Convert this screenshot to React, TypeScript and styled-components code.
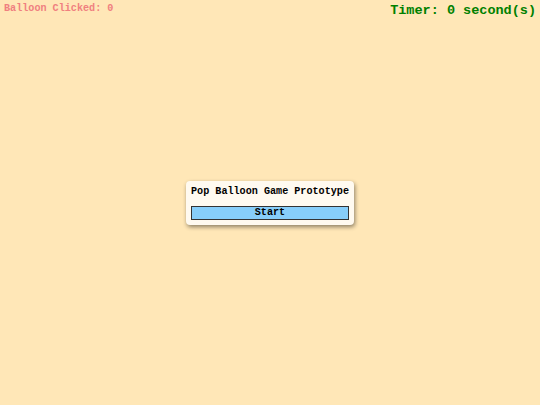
import styled, { createGlobalStyle } from "styled-components";

const GlobalStyle = createGlobalStyle`
  html, body {
    margin: 0;
    padding: 0;
    height: 100%;
  }
  body {
    background: #ffe7b7;
    font-family: "Liberation Mono", "DejaVu Sans Mono", monospace;
  }
  #root {
    min-height: 100%;
  }
`;

const Stage = styled.div`
  position: relative;
  width: 100vw;
  height: 100vh;
  overflow: hidden;
`;

const TopBar = styled.div`
  display: flex;
  justify-content: space-between;
  align-items: flex-start;
  padding: 3px 4px 0 4px;
`;

const Stat = styled.div<{ $color: string; $size: number }>`
  color: ${(p) => p.$color};
  font-size: ${(p) => p.$size}px;
  font-weight: bold;
  line-height: 1.15;
`;

const Overlay = styled.div`
  position: absolute;
  inset: 0;
  display: flex;
  align-items: center;
  justify-content: center;
`;

const Card = styled.div`
  background: #fffaf0;
  border-radius: 4px;
  box-shadow: 1px 2px 4px rgba(0, 0, 0, 0.45);
  padding: 5px;
  display: flex;
  flex-direction: column;
  gap: 8px;
`;

const Title = styled.div`
  font-size: 10.15px;
  font-weight: bold;
  color: #000;
  line-height: 12px;
  white-space: nowrap;
`;

const StartButton = styled.button`
  font-family: inherit;
  font-size: 10.15px;
  font-weight: bold;
  color: #000;
  background: #87cefa;
  border: 1px solid #333;
  padding: 0;
  height: 14px;
  line-height: 12px;
  cursor: pointer;
`;

export default function App() {
  return (
    <>
      <GlobalStyle />
      <Stage>
        <TopBar>
          <Stat $color="#f08080" $size={10.15}>
            Balloon Clicked: 0
          </Stat>
          <Stat $color="#008000" $size={13.5}>
            Timer: 0 second(s)
          </Stat>
        </TopBar>
        <Overlay>
          <Card>
            <Title>Pop Balloon Game Prototype</Title>
            <StartButton>Start</StartButton>
          </Card>
        </Overlay>
      </Stage>
    </>
  );
}
